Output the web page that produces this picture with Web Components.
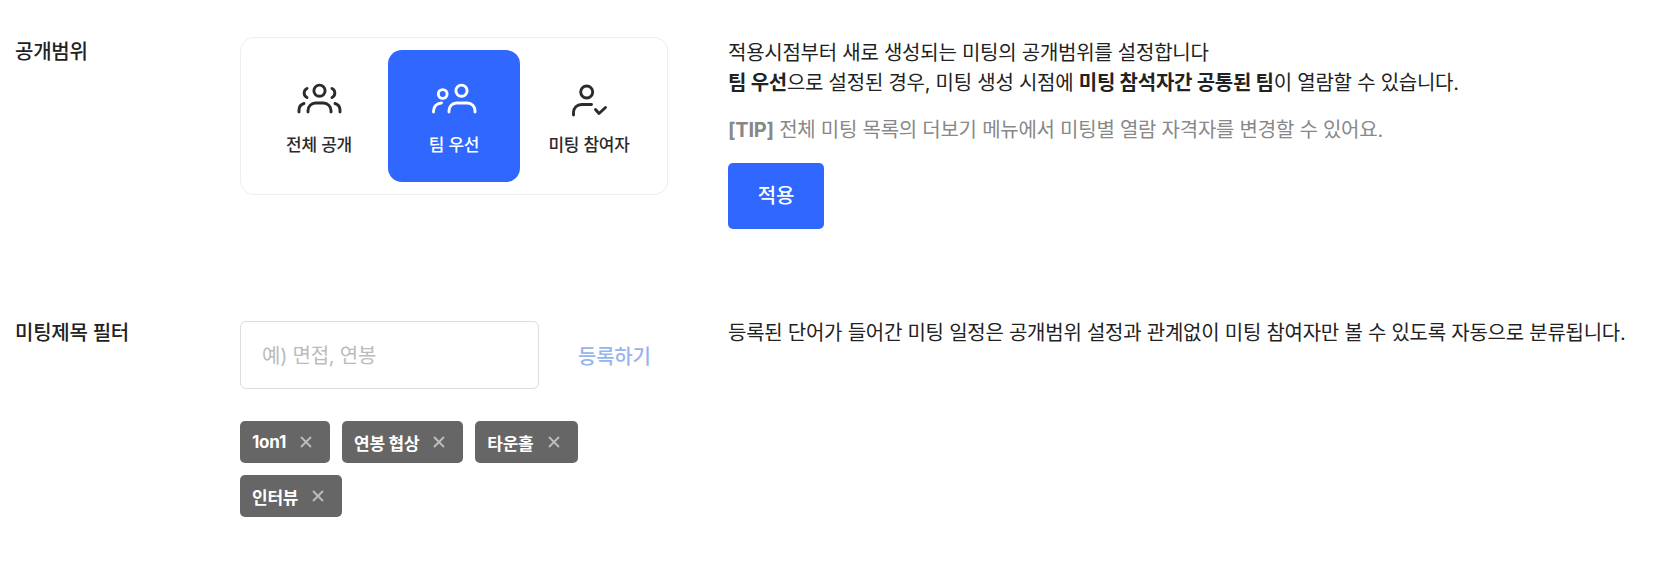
<!DOCTYPE html>
<html lang="ko">
<head>
<meta charset="utf-8">
<title>미팅 설정</title>
<style>
    html, body {
        margin: 0;
        padding: 0;
        background: #fff;
        color: #222;
        font-family: Inter, "Noto Sans CJK KR", sans-serif;
        font-size: 20px;
        letter-spacing: -0.25px;
    }
    .page {
        display: flex;
        flex-direction: column;
        gap: 89px;
        padding-top: 37px;
    }
    b { font-weight: 700; }
</style>
</head>
<body>
<div class="page">
    <mk-setting-row label="공개범위">
        <mk-scope-card slot="control">
            <mk-scope-option text="전체 공개" icon="all"></mk-scope-option>
            <mk-scope-option text="팀 우선" icon="team" active></mk-scope-option>
            <mk-scope-option text="미팅 참여자" icon="member"></mk-scope-option>
        </mk-scope-card>
        <mk-help-text slot="help" nudge>
            <div>적용시점부터 새로 생성되는 미팅의 공개범위를 설정합니다</div>
            <div><b>팀 우선</b>으로 설정된 경우, 미팅 생성 시점에 <b>미팅 참석자간 공통된 팀</b>이 열람할 수 있습니다.</div>
            <mk-tip><b>[TIP]</b> 전체 미팅 목록의 더보기 메뉴에서 미팅별 열람 자격자를 변경할 수 있어요.</mk-tip>
            <mk-apply-button>적용</mk-apply-button>
        </mk-help-text>
    </mk-setting-row>
    <mk-setting-row label="미팅제목 필터" filter>
        <mk-word-filter slot="control" placeholder="예) 면접, 연봉" action="등록하기">
            <mk-chip>1on1</mk-chip>
            <mk-chip>연봉 협상</mk-chip>
            <mk-chip>타운홀</mk-chip>
            <mk-chip>인터뷰</mk-chip>
        </mk-word-filter>
        <mk-help-text slot="help">
            <div>등록된 단어가 들어간 미팅 일정은 공개범위 설정과 관계없이 미팅 참여자만 볼 수 있도록 자동으로 분류됩니다.</div>
        </mk-help-text>
    </mk-setting-row>
</div>

<script>
(() => {

    const icons = {
        all: `
            <circle cx="24.5" cy="15.7" r="5.6"/>
            <path d="M13 37v-1.5a7.5 7.5 0 0 1 7.5-7.5h8a7.5 7.5 0 0 1 7.5 7.5V37"/>
            <path d="M12 13.5a5 5 0 0 0 0 9"/>
            <path d="M37 13.5a5 5 0 0 1 0 9"/>
            <path d="M4 37v-2a7 7 0 0 1 5-6.5"/>
            <path d="M45 37v-2a7 7 0 0 0-5-6.5"/>`,
        team: `
            <circle cx="12.7" cy="19" r="4.4"/>
            <circle cx="31.5" cy="15.7" r="5.6"/>
            <path d="M3.5 37v-1a8 8 0 0 1 8-8"/>
            <path d="M19 37v-1.5a7.5 7.5 0 0 1 7.5-7.5h11a7.5 7.5 0 0 1 7.5 7.5V37"/>`,
        member: `
            <circle cx="21.7" cy="17" r="6"/>
            <path d="M8.5 40v-2.5a8 8 0 0 1 8-8h10"/>
            <path d="M30.5 34.5l3.5 4 6.5-6"/>`
    };

    class SettingRow extends HTMLElement {
        constructor() {
            super();
            this.attachShadow({mode: 'open'});
            this.shadowRoot.innerHTML = `
                <style>
                    :host {
                        display: grid;
                        grid-template-columns: 240px 488px 1fr;
                        align-items: start;
                    }
                    .label {
                        padding-left: 15px;
                        font-weight: 500;
                        line-height: 30px;
                        color: #222;
                    }
                    :host([filter]) .control {
                        margin-top: 3px;
                    }
                </style>
                <div class="label"></div>
                <div class="control"><slot name="control"></slot></div>
                <div><slot name="help"></slot></div>
            `;
            this.shadowRoot.querySelector('.label').textContent = this.getAttribute('label');
        }
    }

    class ScopeCard extends HTMLElement {
        constructor() {
            super();
            this.attachShadow({mode: 'open'});
            this.shadowRoot.innerHTML = `
                <style>
                    :host {
                        display: flex;
                        gap: 3px;
                        width: 428px;
                        box-sizing: border-box;
                        padding: 12px;
                        border: 1px solid #eee;
                        border-radius: 14px;
                        background: #fff;
                    }
                </style>
                <slot></slot>
            `;
        }
    }

    class ScopeOption extends HTMLElement {
        constructor() {
            super();
            this.attachShadow({mode: 'open'});
            this.shadowRoot.innerHTML = `
                <style>
                    :host {
                        display: flex;
                        flex-direction: column;
                        align-items: center;
                        justify-content: center;
                        gap: 10px;
                        width: 132px;
                        height: 132px;
                        border-radius: 14px;
                        color: #2b2b2b;
                        font-size: 17px;
                        font-weight: 500;
                        line-height: 24px;
                    }
                    :host([active]) {
                        background: #3067ff;
                        color: #fff;
                    }
                    svg {
                        display: block;
                        width: 48px;
                        height: 48px;
                        fill: none;
                        stroke: currentColor;
                        stroke-width: 2.9;
                        stroke-linecap: round;
                        stroke-linejoin: round;
                    }
                </style>
                <svg viewBox="0 0 48 48">${icons[this.getAttribute('icon')]}</svg>
                <span>${this.getAttribute('text')}</span>
            `;
        }
    }

    class HelpText extends HTMLElement {
        constructor() {
            super();
            this.attachShadow({mode: 'open'});
            this.shadowRoot.innerHTML = `
                <style>
                    :host {
                        display: block;
                        line-height: 30px;
                        color: #222;
                    }
                    :host([nudge]) {
                        padding-top: 1px;
                    }
                </style>
                <slot></slot>
            `;
        }
    }

    class Tip extends HTMLElement {
        constructor() {
            super();
            this.attachShadow({mode: 'open'});
            this.shadowRoot.innerHTML = `
                <style>
                    :host {
                        display: block;
                        margin-top: 17px;
                        color: #888;
                    }
                </style>
                <slot></slot>
            `;
        }
    }

    class ApplyButton extends HTMLElement {
        constructor() {
            super();
            this.attachShadow({mode: 'open'});
            this.shadowRoot.innerHTML = `
                <style>
                    :host {
                        display: flex;
                        align-items: center;
                        justify-content: center;
                        width: 96px;
                        height: 66px;
                        margin-top: 18px;
                        border-radius: 5px;
                        background: #3067ff;
                        color: #fff;
                        font-weight: 500;
                    }
                </style>
                <slot></slot>
            `;
        }
    }

    class WordFilter extends HTMLElement {
        constructor() {
            super();
            this.attachShadow({mode: 'open'});
            this.shadowRoot.innerHTML = `
                <style>
                    :host {
                        display: block;
                        width: 428px;
                    }
                    .entry {
                        display: flex;
                        align-items: center;
                        gap: 39px;
                    }
                    .field {
                        display: flex;
                        align-items: center;
                        box-sizing: border-box;
                        width: 299px;
                        height: 68px;
                        padding: 0 21px 2px;
                        border: 1px solid #ddd;
                        border-radius: 6px;
                        color: #bbb;
                    }
                    .action {
                        color: #97b4ee;
                        font-weight: 500;
                    }
                    .chips {
                        display: flex;
                        flex-wrap: wrap;
                        gap: 12px;
                        width: 360px;
                        margin-top: 32px;
                    }
                </style>
                <div class="entry">
                    <div class="field"></div>
                    <div class="action"></div>
                </div>
                <div class="chips"><slot></slot></div>
            `;
            this.shadowRoot.querySelector('.field').textContent = this.getAttribute('placeholder');
            this.shadowRoot.querySelector('.action').textContent = this.getAttribute('action');
        }
    }

    class Chip extends HTMLElement {
        constructor() {
            super();
            this.attachShadow({mode: 'open'});
            this.shadowRoot.innerHTML = `
                <style>
                    :host {
                        display: inline-flex;
                        align-items: center;
                        gap: 14px;
                        height: 42px;
                        box-sizing: border-box;
                        padding: 0 18px 0 12px;
                        border-radius: 5px;
                        background: #666;
                        color: #fff;
                        font-size: 17px;
                        font-weight: 700;
                    }
                    svg {
                        display: block;
                        width: 12px;
                        height: 12px;
                        stroke: #bdbdbd;
                        stroke-width: 1.9;
                        fill: none;
                    }
                </style>
                <slot></slot>
                <svg viewBox="0 0 12 12"><path d="M1 1l10 10M11 1L1 11"/></svg>
            `;
        }
    }

    customElements.define('mk-setting-row', SettingRow);
    customElements.define('mk-scope-card', ScopeCard);
    customElements.define('mk-scope-option', ScopeOption);
    customElements.define('mk-help-text', HelpText);
    customElements.define('mk-tip', Tip);
    customElements.define('mk-apply-button', ApplyButton);
    customElements.define('mk-word-filter', WordFilter);
    customElements.define('mk-chip', Chip);

})();
</script>
</body>
</html>
